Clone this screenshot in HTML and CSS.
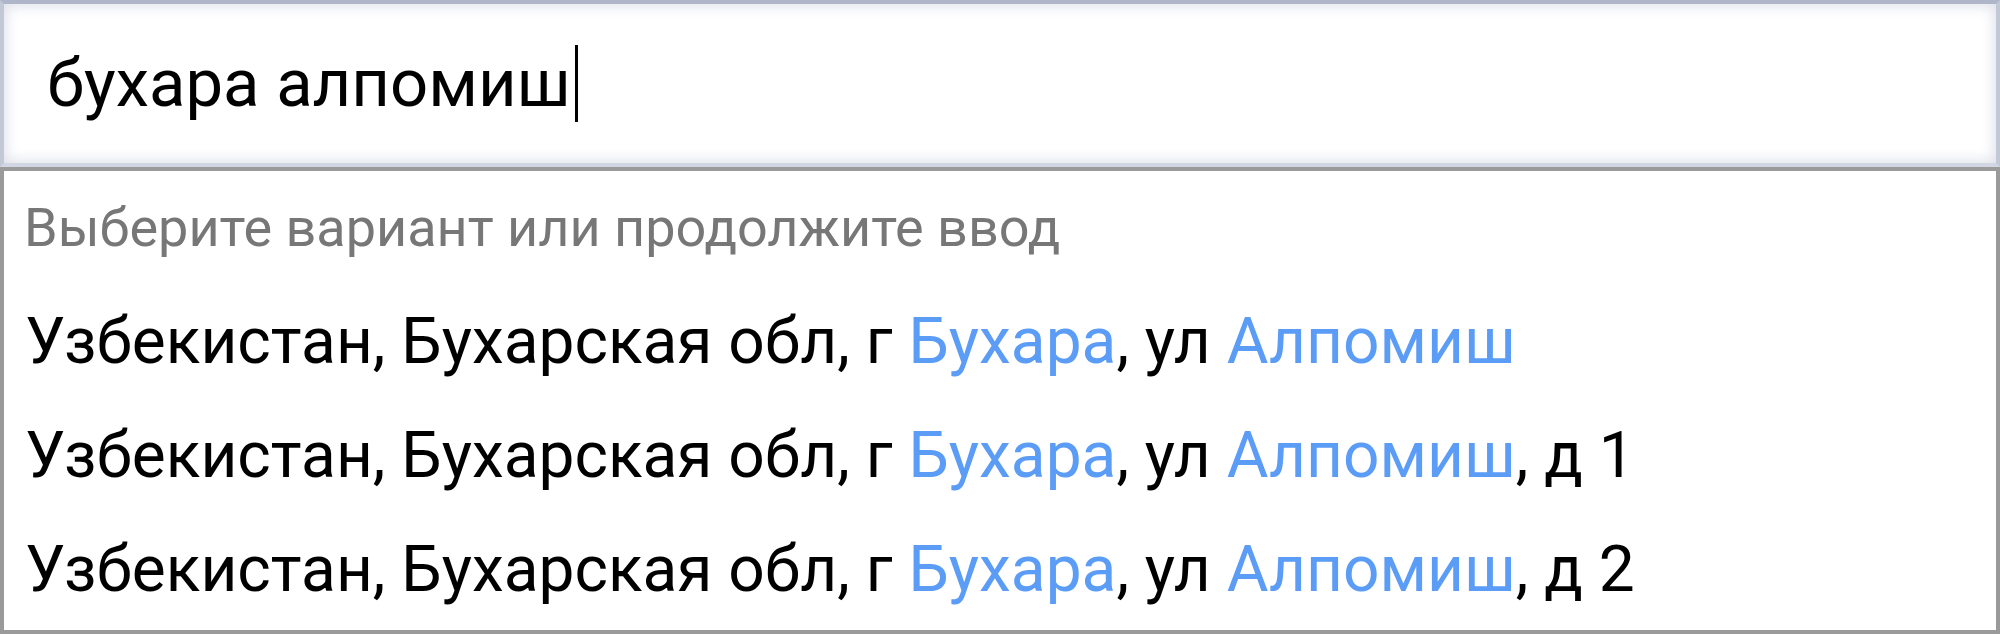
FILE: index.html
```html
<!DOCTYPE html>
<html lang="ru">
<head>
<meta charset="utf-8">
<link rel="stylesheet" href="styles.css">
</head>
<body>
<div class="widget">
  <div class="search">
    <span class="query">бухара алпомиш</span><span class="caret"></span>
  </div>
  <div class="dropdown">
    <div class="hint">Выберите вариант или продолжите ввод</div>
    <div class="item">Узбекистан, Бухарская обл, г <span class="hl">Бухара</span>, ул <span class="hl">Алпомиш</span></div>
    <div class="item">Узбекистан, Бухарская обл, г <span class="hl">Бухара</span>, ул <span class="hl">Алпомиш</span>, д 1</div>
    <div class="item">Узбекистан, Бухарская обл, г <span class="hl">Бухара</span>, ул <span class="hl">Алпомиш</span>, д 2</div>
  </div>
</div>
</body>
</html>
```

FILE: styles.css
```css
html, body {
  margin: 0;
  padding: 0;
  background: #ffffff;
}
body {
  width: 2000px;
  height: 634px;
  overflow: hidden;
  font-family: Roboto, "Noto Sans", sans-serif;
}
.widget {
  display: flex;
  flex-direction: column;
  width: 2000px;
}
.search {
  box-sizing: border-box;
  height: 167px;
  border-top: 4px solid #b0b6c9;
  border-left: 4px solid #c3c8d7;
  border-right: 4px solid #c3c8d7;
  border-bottom: 4px solid #d2d6e2;
  box-shadow: inset 0 0 14px 2px #dde0ea;
  background: #ffffff;
  display: flex;
  align-items: center;
  padding-left: 43px;
}
.query {
  font-size: 67px;
  color: #000000;
  line-height: 1;
}
.caret {
  display: inline-block;
  width: 3px;
  height: 77px;
  background: #000000;
  margin-left: 4px;
}
.dropdown {
  box-sizing: border-box;
  height: 467px;
  border: 4px solid #9a9a9a;
  background: #ffffff;
  display: flex;
  flex-direction: column;
  padding-left: 20px;
}
.hint {
  font-size: 54px;
  line-height: 113.5px;
  color: #777777;
}
.item {
  font-size: 64px;
  line-height: 114px;
  color: #000000;
  padding-left: 1px;
}
.hl {
  color: #5b9cf6;
}
```
